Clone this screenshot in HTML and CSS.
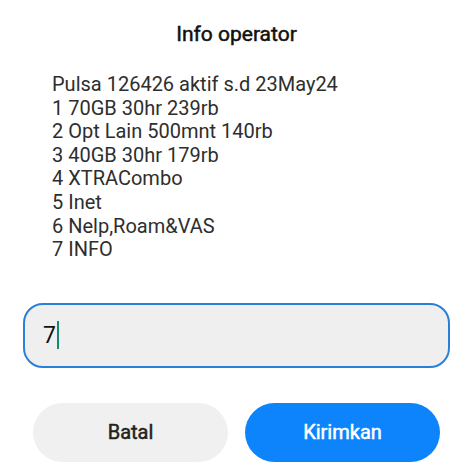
FILE: index.html
```html
<!DOCTYPE html>
<html lang="id">
<head>
    <meta charset="UTF-8">
    <title>Info operator</title>
    <link rel="stylesheet" href="styles.css">
</head>
<body>
    <div class="dialog">
        <h2 class="judul">Info operator</h2>
        <div class="pesan">
            <p>Pulsa 126426 aktif s.d 23May24</p>
            <p>1 70GB 30hr 239rb</p>
            <p>2 Opt Lain 500mnt 140rb</p>
            <p>3 40GB 30hr 179rb</p>
            <p>4 XTRACombo</p>
            <p>5 Inet</p>
            <p>6 Nelp,Roam&amp;VAS</p>
            <p>7 INFO</p>
        </div>
        <div class="isian">
            <span class="nilai">7</span><span class="kursor"></span>
        </div>
        <div class="tombol">
            <button class="batal">Batal</button>
            <button class="kirim">Kirimkan</button>
        </div>
    </div>
</body>
</html>
```

FILE: styles.css
```css
body {
    margin: 0;
    padding: 0;
    background-color: #ffffff;
    font-family: Roboto, "Noto Sans", sans-serif;
    overflow: hidden;
}

.dialog {
    height: 474px;
    padding: 21px 24px 0 23px;
    box-sizing: border-box;
}

.judul {
    margin: 0;
    font-size: 21px;
    font-weight: 400;
    -webkit-text-stroke: 0.5px #111111; /* medium */
    color: #111111;
    text-align: center;
    line-height: 26px;
}

.pesan {
    margin-top: 26px;
    padding-left: 29px;
    color: #2e2e2e;
    font-size: 20px;
    line-height: 23.6px;
}

.pesan p {
    margin: 0;
}

.isian {
    margin-top: 41px;
    height: 61px;
    border: 2px solid #2a80d8;
    border-radius: 20px;
    background-color: #efefef;
    display: flex;
    align-items: center;
    padding-left: 18px;
}

.nilai {
    font-size: 23px;
    color: #111111;
}

.kursor {
    width: 2px;
    height: 28px;
    background-color: #148a72;
    margin-left: 1px;
}

.tombol {
    display: flex;
    gap: 17px;
    margin-top: 35px;
    padding: 0 10px;
}

.tombol button {
    flex: 1;
    height: 59px;
    border: none;
    border-radius: 30px;
    font-family: Roboto, "Noto Sans", sans-serif;
    font-size: 20px;
    font-weight: 400;
    -webkit-text-stroke: 0.5px currentColor;
}

.batal {
    background-color: #f0f0f0;
    color: #222222;
}

.kirim {
    background-color: #0d84fb;
    color: #ffffff;
}
```
